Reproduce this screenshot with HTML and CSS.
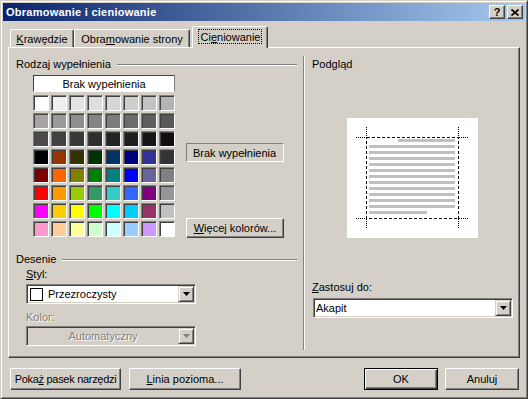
FILE: index.html
```html
<!DOCTYPE html>
<html lang="pl">
<head>
    <meta charset="UTF-8">
    <title>Obramowanie i cieniowanie</title>
    <link rel="stylesheet" href="styles.css">
</head>
<body>
<div class="window">
    <div class="titlebar">
        <span class="title">Obramowanie i cieniowanie</span>
        <div class="title-buttons">
            <span class="tb-btn">?</span>
            <span class="tb-btn">
                <svg width="8" height="7" viewBox="0 0 8 7"><path d="M0.5 0.5L7.5 6.5M7.5 0.5L0.5 6.5" stroke="#000" stroke-width="1.7"/></svg>
            </span>
        </div>
    </div>

    <div class="dialog-body">
        <div class="tabs">
            <div class="tab tab-1"><span><u>K</u>rawędzie</span></div>
            <div class="tab tab-2"><span>Obra<u>m</u>owanie strony</span></div>
            <div class="tab tab-3 active"><span class="focus">Ci<u>e</u>niowanie</span></div>
        </div>

        <div class="panel">
            <div class="col-left">
                <div class="group-title"><span>Rodzaj wypełnienia</span></div>
                <div class="fill-row">
                    <div class="fill-left">
                        <div class="no-fill">Brak wypełnienia</div>
                        <div class="palette" id="palette"></div>
                    </div>
                    <div class="fill-side">
                        <div class="static-box">Brak wypełnienia</div>
                        <button class="btn more-btn"><span><u>W</u>ięcej kolorów...</span></button>
                    </div>
                </div>

                <div class="group-title desenie"><span>Desenie</span></div>
                <div class="field-label"><u>S</u>tyl:</div>
                <div class="combo style-combo">
                    <span class="combo-swatch"></span>
                    <span class="combo-text">Przezroczysty</span>
                    <span class="drop"><svg width="7" height="4" viewBox="0 0 7 4"><path d="M0 0H7L3.5 4Z" fill="#000"/></svg></span>
                </div>
                <div class="field-label disabled kolor-label">Kolor:</div>
                <div class="combo disabled-combo">
                    <span class="combo-text centered">Automatyczny</span>
                    <span class="drop"><svg width="7" height="4" viewBox="0 0 7 4"><path d="M0 0H7L3.5 4Z" fill="#808080"/></svg></span>
                </div>
            </div>

            <div class="sep"></div>

            <div class="col-right">
                <div class="group-title plain"><span>Podgląd</span></div>
                <div class="preview">
                    <svg width="131" height="120" viewBox="0 0 131 120" shape-rendering="crispEdges">
                        <g fill="#c0c0c0">
                            <rect x="51" y="21" width="57" height="3"/>
                            <rect x="22" y="27" width="86" height="3"/>
                            <rect x="22" y="33" width="86" height="3"/>
                            <rect x="22" y="39" width="86" height="3"/>
                            <rect x="22" y="45" width="86" height="3"/>
                            <rect x="22" y="51" width="86" height="3"/>
                            <rect x="22" y="57" width="86" height="3"/>
                            <rect x="22" y="63" width="86" height="3"/>
                            <rect x="22" y="69" width="86" height="3"/>
                            <rect x="22" y="75" width="86" height="3"/>
                            <rect x="22" y="81" width="86" height="3"/>
                            <rect x="22" y="87" width="86" height="3"/>
                            <rect x="22" y="93" width="58" height="3"/>
                        </g>
                        <rect x="19.5" y="19.5" width="92" height="81" fill="none" stroke="#000" stroke-dasharray="3,2"/>
                        <g stroke="#000" stroke-dasharray="1,1">
                            <line x1="19.5" y1="9" x2="19.5" y2="19"/>
                            <line x1="111.5" y1="9" x2="111.5" y2="19"/>
                            <line x1="19.5" y1="101" x2="19.5" y2="111"/>
                            <line x1="111.5" y1="101" x2="111.5" y2="111"/>
                            <line x1="9" y1="19.5" x2="19" y2="19.5"/>
                            <line x1="112" y1="19.5" x2="122" y2="19.5"/>
                            <line x1="9" y1="100.5" x2="19" y2="100.5"/>
                            <line x1="112" y1="100.5" x2="122" y2="100.5"/>
                        </g>
                    </svg>
                </div>
                <div class="field-label zastosuj"><u>Z</u>astosuj do:</div>
                <div class="combo apply-combo">
                    <span class="combo-text">Akapit</span>
                    <span class="drop"><svg width="7" height="4" viewBox="0 0 7 4"><path d="M0 0H7L3.5 4Z" fill="#000"/></svg></span>
                </div>
            </div>
        </div>

        <div class="actions">
            <button class="btn toolbar-btn"><span>Poka<u>ż</u> pasek narzędzi</span></button>
            <button class="btn line-btn"><span><u>L</u>inia pozioma...</span></button>
            <div class="spacer"></div>
            <button class="btn default ok-btn">OK</button>
            <button class="btn cancel-btn">Anuluj</button>
        </div>
    </div>
</div>
<script>
    document.addEventListener('DOMContentLoaded', function() {
        const palette = document.getElementById('palette');
        const colors = [
            "#ffffff", "#efefef", "#e4e4e4", "#dedede", "#d6d6d6", "#cecece", "#c3c3c3", "#b4b4b4",
            "#a4a4a4", "#999999", "#8f8f8f", "#858585", "#7b7b7b", "#6c6c6c", "#5f5f5f", "#585858",
            "#4b4b4b", "#424242", "#383838", "#2e2e2e", "#232323", "#1f1f1f", "#161616", "#110d12",
            "#000000", "#993300", "#333300", "#003300", "#003366", "#000080", "#333399", "#333333",
            "#800000", "#ff6600", "#808000", "#008000", "#008080", "#0000ff", "#666699", "#808080",
            "#ff0000", "#ff9900", "#99cc00", "#339966", "#33cccc", "#3366ff", "#800080", "#969696",
            "#ff00ff", "#ffcc00", "#ffff00", "#00ff00", "#00ffff", "#00ccff", "#993366", "#c0c0c0",
            "#ff99cc", "#ffcc99", "#ffff99", "#ccffcc", "#ccffff", "#99ccff", "#cc99ff", "#ffffff"
        ];
        colors.forEach(color => {
            const cell = document.createElement('div');
            cell.className = 'swatch';
            cell.style.backgroundColor = color;
            palette.appendChild(cell);
        });
    });
</script>
</body>
</html>
```

FILE: styles.css
```css
body {
    margin: 0;
    padding: 0;
    background-color: #d4d0c8;
    font-family: "Liberation Sans", Arial, sans-serif;
    font-size: 11px;
    color: #000;
}
.window {
    width: 528px;
    height: 399px;
    box-sizing: border-box;
    padding: 2px;
    border: 1px solid;
    border-color: #d4d0c8 #404040 #404040 #d4d0c8;
    box-shadow: inset 1px 1px #fff, inset -1px -1px #808080;
    background-color: #d4d0c8;
}
.titlebar {
    height: 18px;
    display: flex;
    align-items: center;
    justify-content: space-between;
    padding: 0 2px 0 3px;
    background: linear-gradient(to right, #0a246a, #a6caf0);
}
.title {
    color: #fff;
    font-weight: bold;
    letter-spacing: 0.25px;
}
.title-buttons {
    display: flex;
    gap: 2px;
}
.tb-btn {
    width: 16px;
    height: 14px;
    box-sizing: border-box;
    border: 1px solid;
    border-color: #fff #404040 #404040 #fff;
    box-shadow: inset -1px -1px #808080;
    background-color: #d4d0c8;
    display: flex;
    align-items: center;
    justify-content: center;
    font-weight: bold;
    font-size: 11px;
    line-height: 12px;
}
.dialog-body {
    padding: 5px 5px 0 5px;
}
.tabs {
    display: flex;
    align-items: flex-end;
    height: 21px;
    padding-left: 2px;
    position: relative;
    z-index: 1;
}
.tab {
    height: 18px;
    box-sizing: border-box;
    border-top: 1px solid #fff;
    border-left: 1px solid #fff;
    border-right: 1px solid #404040;
    box-shadow: inset -1px 0 #808080;
    border-radius: 2px 2px 0 0;
    display: flex;
    align-items: center;
    justify-content: center;
    background-color: #d4d0c8;
}
.tab-1 {
    width: 64px;
}
.tab-2 {
    width: 116px;
}
.tab-3 {
    width: 76px;
    margin-left: 2px;
}
.tab.active {
    height: 22px;
    margin-bottom: -1px;
    padding-bottom: 2px;
}
.focus {
    outline: 1px dotted #000;
    padding: 1px 1px 0 2px;
}
.panel {
    height: 311px;
    box-sizing: border-box;
    border: 1px solid;
    border-color: #fff #404040 #404040 #fff;
    box-shadow: inset -1px -1px #808080;
    display: flex;
}
.col-left {
    width: 294px;
    box-sizing: border-box;
    padding: 10px 6px 0 7px;
}
.sep {
    margin: 8px 0 7px;
    border-left: 1px solid #808080;
    border-right: 1px solid #fff;
}
.col-right {
    flex: 1;
    padding: 10px 6px 0 7px;
    display: flex;
    flex-direction: column;
}
.group-title {
    display: flex;
    align-items: center;
    gap: 6px;
    line-height: 13px;
}
.group-title::after {
    content: "";
    flex: 1;
    border-top: 1px solid #808080;
    border-bottom: 1px solid #fff;
}
.group-title.plain::after {
    display: none;
}
.fill-row {
    display: flex;
    margin: 4px 0 0 17px;
}
.no-fill {
    height: 17px;
    box-sizing: border-box;
    margin-bottom: 3px;
    background-color: #fff;
    border: 1px solid;
    border-color: #404040 #808080 #fff #404040;
    display: flex;
    align-items: center;
    justify-content: center;
}
.palette {
    display: grid;
    grid-template-columns: repeat(8, 16px);
    grid-auto-rows: 16px;
    gap: 2px;
}
.swatch {
    box-sizing: border-box;
    border: 1px solid;
    border-color: #808080 #fff #fff #808080;
    box-shadow: inset 1px 1px #404040;
}
.fill-side {
    margin-left: 11px;
    width: 98px;
    padding-top: 68px;
    display: flex;
    flex-direction: column;
}
.static-box {
    height: 19px;
    box-sizing: border-box;
    border: 1px solid;
    border-color: #808080 #fff #fff #808080;
    padding-left: 6px;
    display: flex;
    align-items: center;
}
.btn {
    font-family: "Liberation Sans", Arial, sans-serif;
    font-size: 11px;
    color: #000;
    background-color: #d4d0c8;
    border: 1px solid;
    border-color: #fff #404040 #404040 #fff;
    box-shadow: inset -1px -1px #808080;
    padding: 0;
    box-sizing: border-box;
    display: flex;
    align-items: center;
    justify-content: center;
}
.btn.default {
    border-color: #000;
    box-shadow: inset 1px 1px #fff, inset -1px -1px #404040, inset -2px -2px #808080;
}
.more-btn {
    margin-top: 56px;
    height: 20px;
}
.desenie {
    margin-top: 15px;
}
.field-label {
    line-height: 13px;
    margin: 2px 0 0 10px;
}
.field-label.disabled {
    color: #808080;
    text-shadow: 1px 1px #fff;
}
.kolor-label {
    margin-top: 7px;
}
.combo {
    height: 20px;
    box-sizing: border-box;
    display: flex;
    align-items: center;
    padding: 1px;
    background-color: #fff;
    border: 1px solid;
    border-color: #808080 #fff #fff #808080;
    box-shadow: inset 1px 1px #404040, inset -1px -1px #d4d0c8;
}
.style-combo {
    width: 170px;
    margin: 3px 0 0 10px;
}
.disabled-combo {
    width: 170px;
    margin: 2px 0 0 10px;
    background-color: #d4d0c8;
}
.combo-swatch {
    width: 13px;
    height: 13px;
    box-sizing: border-box;
    border: 1px solid #000;
    margin: 0 5px 0 2px;
}
.combo-text {
    flex: 1;
}
.combo-text.centered {
    text-align: center;
    color: #808080;
    text-shadow: 1px 1px #fff;
}
.drop {
    width: 16px;
    height: 16px;
    box-sizing: border-box;
    border: 1px solid;
    border-color: #d4d0c8 #404040 #404040 #d4d0c8;
    box-shadow: inset 1px 1px #fff, inset -1px -1px #808080;
    background-color: #d4d0c8;
    display: flex;
    align-items: center;
    justify-content: center;
}
.preview {
    align-self: center;
    width: 131px;
    height: 120px;
    margin-top: 47px;
    background-color: #fff;
}
.preview svg {
    display: block;
}
.zastosuj {
    margin: 43px 0 0 0;
}
.apply-combo {
    margin: 4px 0 0 1px;
}
.apply-combo .combo-text {
    padding-left: 1px;
}
.actions {
    display: flex;
    margin-top: 10px;
    padding: 0 1px 0 2px;
}
.actions .btn {
    height: 22px;
}
.toolbar-btn {
    width: 111px;
    letter-spacing: -0.3px;
}
.line-btn {
    width: 112px;
    margin-left: 8px;
}
.spacer {
    flex: 1;
}
.ok-btn {
    width: 74px;
}
.cancel-btn {
    width: 74px;
    margin-left: 7px;
}
```
